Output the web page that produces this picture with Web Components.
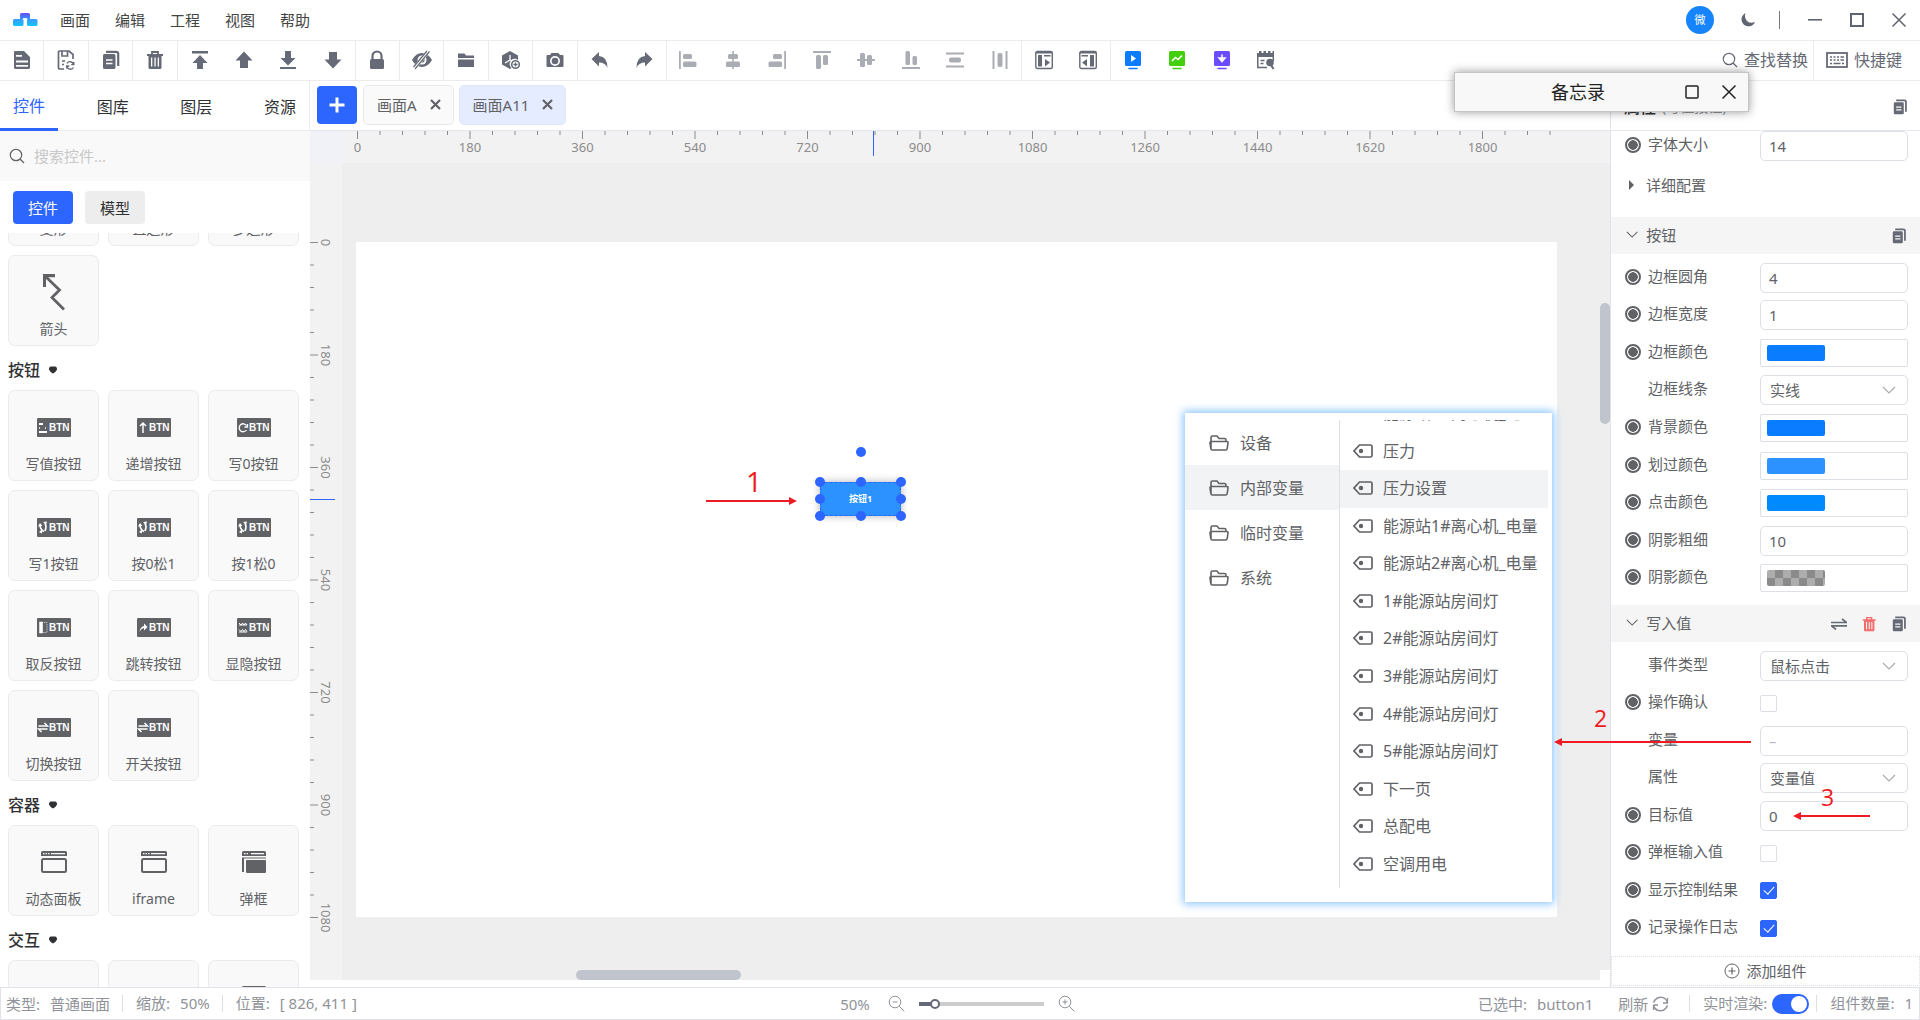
<!DOCTYPE html>
<html lang="zh-CN">
<head>
<meta charset="utf-8">
<title>组态编辑器</title>
<style>
html,body{margin:0;height:100%;overflow:hidden;background:#fff}
body{font-family:"Noto Sans","Noto Sans CJK SC",sans-serif;font-size:15px;line-height:20px;color:#606266}
</style>
</head>
<body>
<hmi-app></hmi-app>
<script>
const BASE = `*{box-sizing:border-box}
button,input,select{font:inherit;color:inherit;margin:0;padding:0;border:0;background:none;outline:0}
button{display:flex;align-items:center;justify-content:center;white-space:nowrap}
a{color:inherit;text-decoration:none}
ui-icon{flex:none}
[hidden]{display:none!important}`;

function define(name, css, html, setup) {
  customElements.define(name, class extends HTMLElement {
    constructor() {
      super();
      this.attachShadow({ mode: 'open' });
    }
    connectedCallback() {
      if (this.shadowRoot.firstChild) return;
      const markup = typeof html === 'function' ? html(this) : html;
      this.shadowRoot.innerHTML = '<style>' + BASE + css + '</style>' + markup;
      if (setup) setup(this, this.shadowRoot);
    }
  });
}

/* Icons: [width, height, body] */
const screen = (c, glyph) => [18, 20, `<rect x="1" y="1" width="16" height="15" rx="1.5" fill="${c}"/>${glyph}<path d="M5 18.500h8" stroke="${c}" stroke-width="1.500" stroke-linecap="round"/>`];
const btn = glyph => [34, 19, `<rect width="34" height="19" rx="1" fill="#606266"/><g fill="none" stroke="#fff" stroke-width="1.500">${glyph}</g><text x="12" y="13" font-family="Liberation Sans, sans-serif" font-weight="700" font-size="10" fill="#fff">BTN</text>`];
const swapGlyph = '<path d="M1.500 8h9L7.500 5M10.500 11h-9l3 3"/>';
const press = '<path d="M3 6.500q0 5 4 7M8 5q2 4 0 8" stroke-width="1.600"/><path d="M1 8.500L3 5l2.500 3zM5 11.500v4l-3-1.500zM6 4l4-.5-1 3.500z" fill="#fff" stroke="none"/>';
const ICONS = {
  logo: [25, 13, '<defs><linearGradient id="g" x2="0" y2="1"><stop stop-color="#6a4dff"/><stop offset="1" stop-color="#2f9bff"/></linearGradient><linearGradient id="h" x2="0" y2="1"><stop stop-color="#3a9bff"/><stop offset="1" stop-color="#12c4ff"/></linearGradient></defs><path d="M7 1.500Q7 0 8.500 0h7Q17 0 17 1.500V6.500h-2.500Q14.500 5 13 5h-2Q9.500 5 9.500 6.500H7z" fill="url(#g)"/><path d="M0 7.500Q0 6 1.500 6H9q1.500 0 1.500 1.500v4Q10.500 13 9 13H1.500Q0 13 0 11.500z" fill="url(#h)"/><path d="M14 7.500Q14 6 15.500 6h7.500q1.500 0 1.500 1.500v4q0 1.500-1.500 1.500h-7.500Q14 13 14 11.500z" fill="url(#h)"/>'],
  save: [18, 20, '<path fill-rule="evenodd" d="M2 1h9l6 6v10.500Q17 19 15.500 19h-13Q1 19 1 17.500V2Q1 1 2 1zM3 5v1.800h6V5zM3 10.500v2h12v-2zM3 15v1.700h12V15z"/>'],
  saveas: [18, 20, '<path fill="none" stroke="currentColor" stroke-width="1.700" d="M7 19H2.500Q1.500 19 1.500 18V2q0-1 1-1H12l4 3.500V9M5 1v5h5.500V1M5 11h3M5 14.500h2"/><path fill="none" stroke="currentColor" stroke-width="1.400" d="M16.500 14.500a3.500 3.500 0 0 0-6.500-1M10 16a3.500 3.500 0 0 0 6.500 1.500M16.800 12v2.600h-2.600M9.700 18.500V16h2.600"/>'],
  copy: [18, 20, '<path fill-rule="evenodd" d="M2.500 4h9.500q1.500 0 1.500 1.500v12q0 1.500-1.500 1.500h-9.500Q1 19 1 17.500v-12Q1 4 2.500 4zM4 9.300v1.500h6.500V9.300zM4 12.800v1.500h6.500v-1.500z"/><path d="M4 1.800h10q2.200 0 2.200 2V16" fill="none" stroke="currentColor" stroke-width="2.200"/>'],
  trash: [18, 20, '<path d="M1 5h16M6 4.500V2h6v2.500" fill="none" stroke="currentColor" stroke-width="1.800"/><path fill-rule="evenodd" d="M2.500 5h13v12.500q0 1.500-1.500 1.500H4q-1.500 0-1.500-1.500zM5 7.500v9h1.300v-9zM8.400 7.500v9h1.300v-9zM11.700 7.500v9H13v-9z"/>'],
  top: [18, 20, '<path d="M1 1h16v2.500H1zM9 5l7.500 8H12v6H6v-6H1.500z"/>'],
  up: [18, 20, '<path d="M9 1.500l8.500 9H13V18H5v-7.500H.5z"/>'],
  bottom: [18, 20, '<path d="M1 19h16v-2H1zM9 15.500L1.500 8H6V1h6v7h4.500z"/>'],
  down: [18, 20, '<path d="M9 18.500L.5 9.500H5V2h8v7.500h4.500z"/>'],
  lock: [18, 20, '<path d="M4.500 9V6a4.500 4.500 0 0 1 9 0v3" fill="none" stroke="currentColor" stroke-width="2.200"/><rect x="2" y="9" width="14" height="10" rx="1.500"/>'],
  eye: [22, 20, '<path d="M1 10Q5 3 11 3t10 7q-4 7-10 7T1 10z"/><circle cx="11" cy="10" r="4.500" fill="#fff"/><circle cx="11" cy="10" r="2.600"/><path d="M17.500 1L3.500 18" stroke="#fff" stroke-width="4"/><path d="M18.500 1.500L4 19M16 1L2.500 17" stroke="currentColor" stroke-width="1.200"/>'],
  folder: [18, 20, '<path d="M1 3.500h6.500l1.500 2h8V8H1zM1 9.500h16v7.500H1z"/>'],
  cube: [20, 20, '<path d="M9 1l8 4.500V10a5 5 0 0 0-6.500 8L9 19l-8-4.500v-9z"/><path d="M9 5v5l-5 3M9 10l4 1.500" stroke="#fff" stroke-width="1.300" fill="none"/><circle cx="14.500" cy="14.500" r="3.800" fill="#fff" stroke="currentColor" stroke-width="1.600"/><path d="M14.500 12.500v4M12.500 14.500h4" stroke="currentColor" stroke-width="1.300"/>'],
  camera: [18, 20, '<path fill-rule="evenodd" d="M5.500 3h7l1.500 2h2.500q1 0 1 1v10q0 1-1 1h-15q-1 0-1-1V6q0-1 1-1H4zM9 6a5 5 0 1 0 0 10A5 5 0 0 0 9 6z"/><circle cx="9" cy="11" r="3.300"/>'],
  undo: [18, 20, '<path d="M8 2v4q8.500.5 8.500 12-2-5.500-8.500-5.500v4L.5 9z"/>'],
  redo: [18, 20, '<path d="M10 2v4Q1.500 6.500 1.500 18q2-5.500 8.500-5.500v4L17.500 9z"/>'],
  al: [18, 20, '<path d="M0 1h1.800v18H0z"/><rect x="4" y="4" width="9" height="5" rx="1.500"/><rect x="4" y="11.500" width="13.500" height="5.500" rx="1.500"/>'],
  ac: [18, 20, '<path d="M8.200 1h1.600v18H8.200z"/><rect x="4" y="4" width="10" height="5" rx="1.500"/><rect x="2" y="11.500" width="14" height="5.500" rx="1.500"/>'],
  ar: [18, 20, '<path d="M16.200 1H18v18h-1.800z"/><rect x="5" y="4" width="9" height="5" rx="1.500"/><rect x=".5" y="11.500" width="13.500" height="5.500" rx="1.500"/>'],
  at: [18, 20, '<path d="M0 1h18v2H0z"/><rect x="3" y="5" width="5" height="14" rx="1.500"/><rect x="10" y="5" width="5" height="10" rx="1.500"/>'],
  am: [18, 20, '<path d="M0 9h18v2H0z"/><rect x="3" y="3" width="5" height="14" rx="1.500"/><rect x="10" y="5" width="5" height="10" rx="1.500"/>'],
  ab: [18, 20, '<path d="M0 17h18v2H0z"/><rect x="3.500" y="1" width="4.500" height="14" rx="1.500"/><rect x="10.500" y="6" width="4.500" height="9" rx="1.500"/>'],
  dv: [18, 20, '<path d="M0 2.500h18v2H0zM0 15.500h18v2H0z"/><rect x="3" y="7.500" width="12" height="5" rx="2"/>'],
  dh: [18, 20, '<path d="M1.500 1h2v18h-2zM14.500 1h2v18h-2z"/><rect x="6.500" y="3" width="5" height="14" rx="2"/>'],
  pl: [18, 20, '<rect x=".8" y="1.500" width="16.500" height="17" rx="1.500" fill="none" stroke="currentColor" stroke-width="1.400"/><path d="M.8 2h16.500v1.500H.8zM3 5h4v11.500H3zM9 5h6.500v1.500H9zM10 9l5 3.500-5 4z"/>'],
  pr: [18, 20, '<rect x=".8" y="1.500" width="16.500" height="17" rx="1.500" fill="none" stroke="currentColor" stroke-width="1.400"/><path d="M.8 2h16.500v1.500H.8zM11 5h4v11.500h-4zM2.500 5H9v1.500H2.500zM8 9l-5 3.500 5 4z"/>'],
  play: screen('#0a7cff', '<path d="M7 5v7l5-3.500z" fill="#fff"/>'),
  chart: screen('#43cf0c', '<path d="M4 11l3.500-3.500L10 9.500l4-4" stroke="#fff" stroke-width="1.600" fill="none"/>'),
  dl: screen('#6a4dff', '<path d="M9 4.500v6M6 8l3 3.500L12 8z" stroke="#fff" stroke-width="1.500" fill="#fff"/>'),
  cal: [20, 20, '<path d="M1 7V3h2V1h2.500v2h2V1H10v2h2V1h2.500v2h2V1H18v6z"/><path d="M1.800 7v10.500H11M17.300 7v4M4.500 10.500h4M4.500 13.500h3" stroke="currentColor" stroke-width="1.500" fill="none"/><circle cx="14" cy="12.500" r="3.800"/><path d="M15 15l2.500 4" stroke="currentColor" stroke-width="2"/>'],
  search: [16, 16, '<circle cx="7" cy="7" r="5.700" fill="none" stroke="currentColor" stroke-width="1.200"/><path d="M11 11l4 4" stroke="currentColor" stroke-width="1.300"/>'],
  zoomout: [17, 17, '<circle cx="7" cy="7" r="5.800" fill="none" stroke="currentColor"/><path d="M11.300 11.300l5 5M4.500 7h5" stroke="currentColor"/>'],
  zoomin: [17, 17, '<circle cx="7" cy="7" r="5.800" fill="none" stroke="currentColor"/><path d="M11.300 11.300l5 5M4.500 7h5M7 4.500v5" stroke="currentColor"/>'],
  keyboard: [22, 16, '<rect x="1" y="1" width="20" height="14" fill="none" stroke="currentColor" stroke-width="1.800"/><path d="M4 5h2M7.500 5h2M11 5h2M14.500 5h3.500M4 8h2M7.500 8h2M11 8h2M14.500 8h3.500M4 11.500h2M7.500 11.500h7M16 11.500h2" stroke="currentColor" stroke-width="1.700"/>'],
  moon: [16, 16, '<path d="M5.500 1a7 7 0 1 0 9.500 9Q9.500 12 6.500 8.500 4 5 5.500 1z"/>'],
  min: [16, 16, '<path d="M1 7h14v1.600H1z"/>'],
  max: [16, 16, '<path d="M2 2h12v12H2z" fill="none" stroke="currentColor" stroke-width="2"/>'],
  frame: [16, 16, '<rect x="2" y="2" width="12" height="12" rx="1" fill="none" stroke="currentColor" stroke-width="1.500"/>'],
  close: [16, 16, '<path d="M1.500 1.500l13 13M14.500 1.500l-13 13" stroke="currentColor" stroke-width="1.500"/>'],
  x: [11, 11, '<path d="M1 1l9 9M10 1l-9 9" stroke="currentColor" stroke-width="2.200"/>'],
  plus: [16, 16, '<path d="M8 0.500v15M.5 8h15" stroke="currentColor" stroke-width="3"/>'],
  caret: [10, 8, '<path d="M2.500.5h5Q9.500 1.500 9 3.500 8 6 5 7.500 2 6 1 3.500.5 1.500 2.500.5z"/>'],
  tri: [8, 12, '<path d="M1 1v10l5-5z"/>'],
  chev: [14, 8, '<path d="M1 1l6 6 6-6" fill="none" stroke="currentColor" stroke-width="1.200"/>'],
  swap: [16, 12, '<path d="M0 4.500h15.500L11 .8M16 7.800H.5L5 11.500" fill="none" stroke="currentColor" stroke-width="1.700"/>'],
  addc: [16, 16, '<circle cx="8" cy="8" r="7" fill="none" stroke="currentColor"/><path d="M8 4.500v7M4.500 8h7" stroke="currentColor" stroke-width="1.200"/>'],
  refresh: [17, 16, '<path d="M15.500 7A7 7 0 0 0 3 4L1.500 6.500M1.500 9A7 7 0 0 0 14 12l1.500-2.500" fill="none" stroke="currentColor" stroke-width="1.500"/><path d="M1.500 9v5M1.500 9H6M15.500 2v5H11" fill="none" stroke="currentColor" stroke-width="1.300"/>'],
  dir: [20, 16, '<path d="M2 14V2.500Q2 1 3.500 1H8l2 2.500h5.500Q17 3.500 17 5v1.500M3.500 15h13q1.500 0 1.700-1.500L19 8q.2-1.500-1.300-1.500H2.200Q.8 6.500 1 8l.8 5.500Q2 15 3.500 15z" fill="none" stroke="currentColor" stroke-width="1.600"/>'],
  tag: [20, 14, '<path d="M6.500 1H17.500Q19 1 19 2.500v9q0 1.500-1.500 1.500h-11L1 7z" fill="none" stroke="currentColor" stroke-width="1.700"/><circle cx="8" cy="7" r="2.200"/>'],
  zig: [24, 38, '<path d="M3 3L17.500 17 10 24.500 22 36.500" fill="none" stroke="currentColor" stroke-width="2.800"/><path d="M1 14V1h12v3.200H4V14z"/>'],
  win: [26, 22, '<path fill-rule="evenodd" d="M1.500 0h23Q26 0 26 1.500V5H0V1.500Q0 0 1.500 0zM10 2v1.200h14V2zM2 2v1.200h1.500V2zM4.500 2v1.200H6V2zM7 2v1.200h1.500V2z"/><rect x="1" y="8" width="24" height="13" rx="1.500" fill="none" stroke="currentColor" stroke-width="2"/>'],
  pop: [26, 22, '<path fill-rule="evenodd" d="M2.500 0h21Q25 0 25 1.500V5H1V1.500Q1 0 2.500 0zM10 2v1.200h13V2zM3 2v1.200h1.500V2zM5.500 2v1.200H7V2z"/><path d="M1 6.500h24v1H3V21H1zM5 10q0-1 1-1h18q1 0 1 1v11q0 1-1 1H6q-1 0-1-1z"/>'],
  bset: btn('<path d="M2 6h4M2 14h8" stroke-width="2.200"/><path d="M2 10h1M8 10h1"/>'),
  binc: btn('<path d="M6 15V5M3 8l3-3 3 3"/>'),
  b0: btn('<path d="M9.500 7.500a4 4 0 1 0 0 4.500M10.500 6v3H7.500" stroke-width="1.300"/>'),
  b1: btn(press),
  binv: btn('<path d="M3 4.500h2v10H3z" fill="#fff"/><path d="M5 4.500h5v10H5z" stroke-width=".7" stroke-dasharray="1.200 1"/>'),
  bjump: btn('<path d="M2.500 14Q3 9 7 8V5.500l3.500 3.500L7 12.500V10Q4 10.500 2.500 14z" fill="#fff" stroke="none"/>'),
  bvis: btn('<path d="M2 5l2 2 1.500-2 1.500 2 1.500-2 1.500 2M2 7h8M2 11.500l2 2 1.500-2 1.500 2 1.500-2 1.500 2M2 14h8" stroke-width="1"/>'),
  bsw: btn(swapGlyph),
};
define('ui-icon', ':host{display:block;line-height:0}svg{display:block}', el => {
  const [w, h, body] = ICONS[el.getAttribute('name')];
  const s = Number(el.getAttribute('size') || h);
  return `<svg width="${w * s / h}" height="${s}" viewBox="0 0 ${w} ${h}" fill="currentColor">${body}</svg>`;
});

define('title-bar', `
:host{display:flex;align-items:center;height:40px;padding:0 13px 1px;color:#444}
nav{display:flex;gap:25px;margin-left:22px}
.right{display:flex;align-items:center;margin-left:auto;color:#606472}
.avatar{width:28px;height:28px;border-radius:50%;background:#1684fc;color:#fff;font-size:11px;margin-right:26px}
.line{width:1px;height:18px;background:#777;margin:0 27px 0 23px}
.win{display:flex;gap:26px}`,
`<ui-icon name="logo"></ui-icon>
<nav>${['画面', '编辑', '工程', '视图', '帮助'].map(t => `<a href="#">${t}</a>`).join('')}</nav>
<div class="right"><button class="avatar">微</button><button aria-label="夜间"><ui-icon name="moon"></ui-icon></button><i class="line"></i>
<div class="win"><button><ui-icon name="min"></ui-icon></button><button><ui-icon name="max"></ui-icon></button><button><ui-icon name="close"></ui-icon></button></div></div>`);

define('tool-bar', `
:host{display:flex;height:41px;border:solid #ebebef;border-width:1px 0;color:#666a76;font-size:16px}
.tools{display:grid;grid-template-columns:repeat(29,1fr);flex:0 1 1289px}
.tools button{border-right:1px solid transparent;padding-bottom:1px}
.tools .sep{border-right-color:#ebebef}.dim{color:#abadb5}
.right{display:flex;margin-left:auto}
.right button{gap:6px;padding:0 5px 1px 6px}
.right button+button{border-left:1px solid #ebebef;padding:0 18px 1px 12px}`,
`<div class="tools">${['save|', 'saveas|', 'copy|', 'trash|', 'top', 'up', 'bottom', 'down|', 'lock|', 'eye|', 'folder|', 'cube|', 'camera|', 'undo', 'redo|', 'al', 'ac', 'ar', 'at', 'am', 'ab', 'dv', 'dh|', 'pl', 'pr|', 'play', 'chart', 'dl', 'cal'].map((n, i) => `<button class="${n.endsWith('|') ? 'sep' : ''} ${i > 14 && i < 23 ? 'dim' : ''}"><ui-icon name="${n.replace('|', '')}"></ui-icon></button>`).join('')}</div>
<div class="right"><button><ui-icon name="search"></ui-icon>查找替换</button><button><ui-icon name="keyboard"></ui-icon>快捷键</button></div>`);

define('widget-card', `
:host{display:block}
button{width:100%;height:91px;flex-direction:column;justify-content:flex-start;padding-top:16px;gap:7px;background:#f9f9f9;border:1px solid #ebebeb;border-radius:7px;font-size:14px;line-height:20px}
span{height:40px;display:flex;align-items:center}`,
el => `<button><span>${el.getAttribute('icon') ? `<ui-icon name="${el.getAttribute('icon')}"></ui-icon>` : ''}</span><slot></slot></button>`);

define('widget-group', `
:host{display:block}
h3{margin:0;height:44px;padding-top:4px;display:flex;align-items:center;gap:8px;font-size:16px;font-weight:500;color:#303133}
.grid{display:grid;grid-template-columns:repeat(3,91px);gap:9px}`,
el => `<h3 ${el.getAttribute('heading') ? '' : 'hidden'}>${el.getAttribute('heading') || ''}<ui-icon name="caret"></ui-icon></h3><div class="grid"><slot></slot></div>`);

const cards = list => list.map(([i, t]) => `<widget-card icon="${i}">${t}</widget-card>`).join('');
define('widget-panel', `
:host{display:flex;flex-direction:column;min-height:0}
.tabs{display:flex;flex:none;justify-content:space-between;height:50px;padding:0 13px;font-size:16px;color:#303133;border-bottom:1px solid #ebebef;border-right:1px solid #ebebef}
.tabs button{padding-top:3px}
.tabs .on{color:#2d65ff;margin:0 -13px -1px;padding:3px 13px 0;border-bottom:3px solid #2d65ff}
.search{display:flex;flex:none;align-items:center;gap:9px;height:50px;padding-left:9px;background:#f9f9f9}
.search input{flex:1;min-width:0}input::placeholder{color:#c8c8c8;opacity:1}
.seg{display:flex;flex:none;gap:12px;padding:10px 13px 9px}
.seg button{height:33px;padding:0 15px;border-radius:4px;background:#ededed;color:#303133}
.seg .on{background:#2d65ff;color:#fff}
.scroll{flex:1;min-height:0;overflow:hidden;padding-left:8px}
.list{margin-top:-78px}`,
`<div class="tabs"><button class="on">控件</button><button>图库</button><button>图层</button><button>资源</button></div>
<label class="search"><ui-icon name="search"></ui-icon><input placeholder="搜索控件..." aria-label="搜索控件"></label>
<div class="seg"><button class="on">控件</button><button>模型</button></div>
<div class="scroll"><div class="list">
<widget-group>${cards([['', '变形'], ['', '直边形'], ['', '多边形'], ['zig', '箭头']])}</widget-group>
<widget-group heading="按钮">${cards([['bset', '写值按钮'], ['binc', '递增按钮'], ['b0', '写0按钮'], ['b1', '写1按钮'], ['b1', '按0松1'], ['b1', '按1松0'], ['binv', '取反按钮'], ['bjump', '跳转按钮'], ['bvis', '显隐按钮'], ['bsw', '切换按钮'], ['bsw', '开关按钮']])}</widget-group>
<widget-group heading="容器">${cards([['win', '动态面板'], ['win', 'iframe'], ['pop', '弹框']])}</widget-group>
<widget-group heading="交互">${cards([['', ''], ['', ''], ['pop', '']])}</widget-group>
</div></div>`);

define('page-tab', `
:host{display:flex;align-items:center;height:40px;gap:13px;padding:0 12px 1px 13px;border:1px solid #e9e9ec;border-radius:5px;background:#fafafa}
:host([active]){background:#e6ecff;border-color:#e1e7fa}`,
`<a href="#"><slot></slot></a><button aria-label="关闭"><ui-icon name="x"></ui-icon></button>`);

/* Ruler: a tick every 36 units, a label every fifth tick, at 0.625 px per unit */
define('ruler-scale', `
:host{display:block;overflow:hidden;background:#f2f2f2}
svg{display:block;width:100%;height:100%}
text{font-family:"Noto Sans",sans-serif;font-size:13px;fill:#8c8c8c;text-anchor:middle;stroke:none}`,
el => {
  const v = el.hasAttribute('vertical'), n = Number(el.getAttribute('ticks'));
  const start = Number(el.getAttribute('start')), mark = Number(el.getAttribute('mark'));
  let s = '';
  for (let i = 0; i <= n; i++) {
    const p = start + i * 22.5, big = i % 5 === 0, len = big ? 8 : 4;
    s += v ? `<path d="M0 ${p}h${len}"/>` : `<path d="M${p} 0v${len}"/>`;
    if (big) s += v ? `<text transform="translate(11 ${p}) rotate(90)">${i * 36}</text>` : `<text x="${p}" y="21">${i * 36}</text>`;
  }
  s += v ? `<path d="M0 ${mark}h25" stroke="#2d65ff"/>` : `<path d="M${mark} 0v25" stroke="#2d65ff"/>`;
  return `<svg stroke="#8c8c8c">${s}</svg>`;
});

define('selected-button', `
:host{position:absolute;width:81px;height:34px}
button{width:100%;height:100%;background:#2b92ff;color:#fff;font-size:9px;font-weight:700;border:1px dashed #2d65ff;box-shadow:0 0 8px rgba(0,0,0,.3)}
i{position:absolute;width:10px;height:10px;margin:-5px;border-radius:50%;background:#2d65ff}`,
`<button>按钮1</button>${['0,0', '50%,0', '100%,0', '0,50%', '100%,50%', '0,100%', '50%,100%', '100%,100%', '50%,-30px'].map(p => `<i style="left:${p.split(',')[0]};top:${p.split(',')[1]}"></i>`).join('')}`);

define('variable-picker', `
:host{position:absolute;display:flex;width:367px;height:489px;padding:7px 4px 14px 0;background:#fff;box-shadow:0 0 8px 2px rgba(64,158,255,.6);font-size:16px;line-height:22px}
.dirs{width:155px;border-right:1px solid #dcdfe6}
.dirs button{width:100%;height:45px;justify-content:flex-start;gap:11px;padding:1px 0 0 24px}
.on{background:#f2f3f5}
.vars{flex:1;min-width:0;overflow:hidden}
.vars div{display:grid;grid-auto-rows:1fr;height:488px;margin-top:-25px}
.vars button{width:100%;justify-content:flex-start;gap:10px;padding:0 0 1px 13px}`,
`<div class="dirs">${['设备', '内部变量', '临时变量', '系统'].map((t, i) => `<button class="${i === 1 ? 'on' : ''}"><ui-icon name="dir"></ui-icon>${t}</button>`).join('')}</div>
<div class="vars"><div>${['能源站3#离心机_电量', '压力', '压力设置', '能源站1#离心机_电量', '能源站2#离心机_电量', '1#能源站房间灯', '2#能源站房间灯', '3#能源站房间灯', '4#能源站房间灯', '5#能源站房间灯', '下一页', '总配电', '空调用电'].map((t, i) => `<button class="${i === 2 ? 'on' : ''}"><ui-icon name="tag"></ui-icon>${t}</button>`).join('')}</div></div>`);

define('stage-area', `
:host{display:flex;flex-direction:column;min-width:0;min-height:0}
.tabs{display:flex;flex:none;align-items:center;gap:5px;height:50px;padding:0 7px 1px;border-bottom:1px solid #e4e7ed}
.add{width:40px;height:38px;margin-right:1px;border-radius:4px;background:#2d65ff;color:#fff}
.board{flex:1;min-height:0;display:grid;grid-template:32px 1fr/32px 1fr;margin-bottom:7px}
.corner{background:#f0f2f8}
.view{position:relative;overflow:hidden;background:#eee}
.page{position:absolute;left:14px;top:79px;width:1201px;height:675px;background:#fff}
selected-button{left:464px;top:240px}
variable-picker{left:829px;top:171px}
.vbar,.hbar{position:absolute;background:#c0c4cc;border-radius:5px}
.vbar{right:0;top:140px;width:10px;height:121px}
.hbar{left:234px;bottom:0;width:165px;height:10px}
.fill{position:absolute;right:0;bottom:0;width:10px;height:10px;background:#fff}`,
`<div class="tabs"><button class="add" aria-label="新建"><ui-icon name="plus"></ui-icon></button><page-tab>画面A</page-tab><page-tab active>画面A11</page-tab></div>
<div class="board"><div class="corner"></div><ruler-scale ticks="53" start="15.5" mark="531.5"></ruler-scale><ruler-scale vertical ticks="30" start="79.5" mark="336.5"></ruler-scale>
<div class="view"><div class="page"><selected-button></selected-button><variable-picker></variable-picker></div><i class="vbar"></i><i class="hbar"></i><i class="fill"></i></div></div>`);

define('prop-row', `
:host{display:grid;grid-template-columns:16px 1fr 148px;align-items:center;column-gap:7px;padding:0 12px 0 14px}
input[type=radio]{appearance:none;width:16px;height:16px;margin-bottom:2px;border-radius:50%;border:2px solid #606266;background:radial-gradient(circle,#606266 4.500px,#fff 5px)}
label{grid-column:2;white-space:nowrap;padding-bottom:4px}
.text{width:148px;height:30px;padding:0 8px;border:1px solid #dcdfe6;border-radius:5px;background:#fff}
input::placeholder{color:#b5b8bf;opacity:1}
.sel{position:relative;display:block}
select{appearance:none;width:148px;height:30px;padding:0 9px;border:1px solid #dcdfe6;border-radius:5px}
.sel ui-icon{position:absolute;right:12px;top:11px;color:#a8abb2}
.color{width:148px;height:28px;padding:0 6px;justify-content:flex-start;border:1px solid #dcdfe6;border-radius:2px}
.color i{width:58px;height:16px;border-radius:2px}
.check{appearance:none;display:block;width:17px;height:17px;border:1px solid #dcdfe6;border-radius:2px}
.check:checked{background:#2d65ff;border-color:#2d65ff}
.check:checked::before{content:"";display:block;width:5px;height:9px;margin:1px auto 0;border:solid #fff;border-width:0 1px 1px 0;transform:rotate(42deg)}`,
el => {
  const a = n => el.getAttribute(n), v = a('value') || '';
  const c = {
    text: () => `<input id="c" class="text" value="${v}" placeholder="${a('hint') || ''}">`,
    select: () => `<span class="sel"><select id="c"><option>${v}</option></select><ui-icon name="chev" size="8"></ui-icon></span>`,
    color: () => `<button id="c" class="color"><i style="background:${v}"></i></button>`,
    check: () => `<input id="c" class="check" type="checkbox" ${v ? 'checked' : ''}>`
  }[a('kind')]();
  return `${el.hasAttribute('plain') ? '' : '<input type="radio" checked aria-label="绑定">'}<label for="c">${a('label')}</label>${c}`;
});

define('prop-section', `
:host{display:block}
header{display:flex;align-items:center;height:37px;padding:0 14px 2px 15px;background:#f5f5f5;gap:8px}
.acts{display:flex;gap:15px;margin-left:auto;color:#666a76;align-items:center;padding-top:2px}
.del{color:#f56c6c}
.rows{display:grid;grid-auto-rows:1fr;padding-top:5px;height:var(--rows,auto)}`,
el => `<header><ui-icon name="chev" size="7"></ui-icon><span>${el.getAttribute('heading')}</span><div class="acts">${el.hasAttribute('removable') ? '<button><ui-icon name="swap"></ui-icon></button><button class="del"><ui-icon name="trash" size="16"></ui-icon></button>' : ''}<button><ui-icon name="copy" size="16"></ui-icon></button></div></header><div class="rows"><slot></slot></div>`);

const row = (kind, label, value, extra = '') => `<prop-row kind="${kind}" label="${label}" value="${value}" ${extra}></prop-row>`;
const checker = 'repeating-conic-gradient(#8a8a8a 0 25%,#adadad 0 50%) 0 0/16px 16px';
define('prop-panel', `
:host{display:flex;flex-direction:column;min-height:0;border-left:1px solid #e0e3ea}
.head{display:flex;flex:none;align-items:center;height:50px;padding:2px 13px 0;border-bottom:1px solid #e4e7ed;font-size:16px;color:#303133}
.head b{font-weight:500}.head small{margin-left:6px;font-size:14px;color:#909399}
.head button{margin-left:auto;color:#666a76}
.first{height:28px;flex:none}
.more{display:flex;align-items:center;gap:10px;height:58px;padding:0 17px 7px}
.body{flex:1;min-height:0;overflow:hidden}
prop-section+prop-section{margin-top:8px}
.add{flex:none;height:30px;margin:0 0 1px;padding-bottom:1px;gap:6px;border:1px dotted #dcdfe6}`,
`<div class="head"><b>属性</b><small>(写值按钮)</small><button><ui-icon name="copy" size="16"></ui-icon></button></div>
<div class="body"><prop-row class="first" kind="text" label="字体大小" value="14"></prop-row>
<div class="more"><ui-icon name="tri"></ui-icon>详细配置</div>
<prop-section heading="按钮" style="--rows:343px">${row('text', '边框圆角', '4')}${row('text', '边框宽度', '1')}${row('color', '边框颜色', '#0a7cff')}${row('select', '边框线条', '实线', 'plain')}${row('color', '背景颜色', '#0a7cff')}${row('color', '划过颜色', '#2b92ff')}${row('color', '点击颜色', '#008aff')}${row('text', '阴影粗细', '10')}${row('color', '阴影颜色', checker)}</prop-section>
<prop-section heading="写入值" removable style="--rows:305px">${row('select', '事件类型', '鼠标点击', 'plain')}${row('check', '操作确认', '')}${row('text', '变量', '', 'plain hint="–"')}${row('select', '属性', '变量值', 'plain')}${row('text', '目标值', '0')}${row('check', '弹框输入值', '')}${row('check', '显示控制结果', '1')}${row('check', '记录操作日志', '1')}</prop-section></div>
<button class="add"><ui-icon name="addc"></ui-icon>添加组件</button>`);

define('status-bar', `
:host{display:grid;grid-template-columns:1fr auto 1fr;align-items:center;height:33px;padding:0 6px 0 5px;border:1px solid #e0e3ea;color:#909399;white-space:nowrap}
div{display:flex;align-items:center}
.l span+span{margin-left:12px;padding-left:13px;border-left:1px solid #dcdfe6;line-height:17px}
b{font-weight:400;margin-left:10px}
.m{gap:14px;padding-right:4px}.m span{margin-right:4px}.r{justify-content:flex-end}
.m input{appearance:none;width:125px;height:4px;background:linear-gradient(90deg,#666a76 14%,#ccc 0)}
.m input::-webkit-slider-thumb{appearance:none;width:10px;height:10px;border:2px solid #666a76;border-radius:50%;background:#fff}
.sw{appearance:none;width:37px;height:20px;margin:0 7px 0 5px;padding:2px;border-radius:10px;background:#2d65ff}
.sw::before{content:"";display:block;width:16px;height:16px;margin-left:auto;border-radius:50%;background:#fff}
.r button{gap:4px;margin:0 20px 0 25px}
.r label,.n{border-left:1px solid #dcdfe6;padding-left:13px;line-height:17px}`,
`<div class="l"><span>类型:<b>普通画面</b></span><span>缩放:<b>50%</b></span><span>位置:<b>[ 826, 411 ]</b></span></div>
<div class="m"><span>50%</span><button aria-label="缩小"><ui-icon name="zoomout"></ui-icon></button><input type="range" value="10" aria-label="缩放"><button aria-label="放大"><ui-icon name="zoomin"></ui-icon></button></div>
<div class="r"><span>已选中:<b>button1</b></span><button>刷新<ui-icon name="refresh"></ui-icon></button><label for="live">实时渲染:</label><input id="live" class="sw" type="checkbox" checked><span class="n">组件数量:<b>1</b></span></div>`);

define('memo-window', `
:host{position:absolute;left:1454px;top:72px;width:295px;height:40px;display:flex;align-items:center;justify-content:flex-end;gap:21px;padding:0 11px 1px;background:#f8f8f8;border:1px solid #c4c4c4;box-shadow:0 0 9px rgba(0,0,0,.4);color:#222}
span{font-size:18px;line-height:24px;margin-right:58px}`,
`<span>备忘录</span><button><ui-icon name="frame"></ui-icon></button><button><ui-icon name="close"></ui-icon></button>`);

define('call-out', `
:host{position:absolute;color:#ed1c24;width:var(--w)}
span{position:absolute;left:var(--tx);bottom:var(--up);font-family:"Open Sans","Noto Sans",sans-serif;line-height:1;font-size:var(--fs,23px)}
i{display:block;position:relative;height:2px;margin:0 0 0 4px;background:currentColor}
i::before{content:"";position:absolute;left:-4px;top:-3px;border:4px solid transparent;border-right:8px solid currentColor;border-left:0}
:host([right]) i{margin:0 4px 0 0}
:host([right]) i::before{left:auto;right:-4px;border-left:8px solid currentColor;border-right:0}`,
`<span><slot></slot></span><i></i>`);

define('hmi-app', `
:host{display:flex;flex-direction:column;height:100vh;position:relative;overflow:hidden}
main{flex:1;min-height:0;display:grid;grid-template-columns:310px 1fr 310px}
.a{left:706px;top:500px;--w:91px;--tx:40px;--fs:28px;--up:7px}
.b{left:1554px;top:741px;--w:197px;--tx:40px;--up:13px}
.c{left:1793px;top:815px;--w:77px;--tx:28px;--up:8px}`,
`<title-bar></title-bar><tool-bar></tool-bar>
<main><widget-panel></widget-panel><stage-area></stage-area><prop-panel></prop-panel></main>
<status-bar></status-bar>
<memo-window></memo-window>
<call-out class="a" right>1</call-out><call-out class="b">2</call-out><call-out class="c">3</call-out>`);
</script>
</body>
</html>
